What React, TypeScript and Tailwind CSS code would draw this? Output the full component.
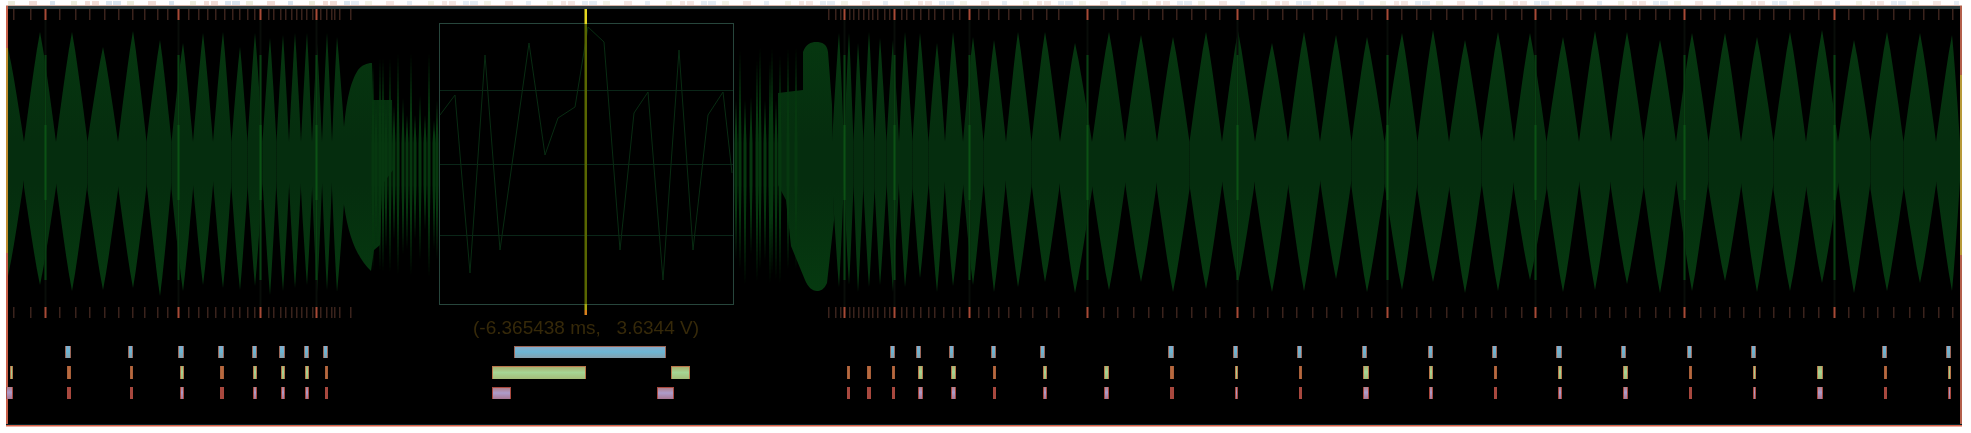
type Peak = [number, number, number];
type Mark = [number, number];

// [x, top tip y, bottom tip y]
const leftPeaks: Peak[] = [
  [8, 48, 276], [40, 32, 285], [72, 32, 291], [103, 47, 290], [133, 31, 288], [160, 40, 296],
  [183, 43, 291], [203, 33, 285], [223, 32, 288], [240, 47, 290], [255, 33, 286], [270, 38, 295],
  [283, 35, 291], [295, 33, 288], [307, 33, 285], [317, 43, 293], [327, 33, 290], [337, 37, 292],
];
const rightPeaks: Peak[] = [
  [839, 33, 287], [849, 33, 285], [858, 43, 292], [869, 32, 287], [880, 38, 285], [893, 40, 292],
  [905, 32, 287], [920, 33, 278], [937, 43, 292], [953, 32, 286], [973, 37, 285], [994, 40, 292],
  [1018, 32, 287], [1045, 32, 282], [1075, 43, 293], [1109, 32, 290], [1141, 35, 282], [1173, 37, 292],
  [1206, 32, 289], [1238, 31, 283], [1272, 43, 292], [1304, 32, 291], [1336, 35, 279], [1367, 37, 292],
  [1402, 33, 290], [1433, 30, 282], [1465, 40, 293], [1498, 32, 291], [1530, 33, 280], [1563, 37, 292],
  [1595, 31, 290], [1627, 32, 284], [1660, 40, 293], [1692, 33, 291], [1725, 33, 281], [1757, 37, 292],
  [1790, 32, 291], [1822, 30, 283], [1854, 40, 293], [1887, 32, 291], [1920, 33, 283], [1952, 35, 291],
];
const spikes: Peak[] = [
  [373, 63, 271], [376, 100, 245], [380, 58, 271], [383, 58, 272], [386, 100, 250], [390, 58, 273],
  [394, 105, 240], [398, 53, 275], [403, 98, 255], [407, 115, 250], [411, 53, 276], [415, 115, 240],
  [420, 95, 260], [425, 115, 230], [429, 53, 277], [434, 120, 250], [437, 100, 260],
  [736, 100, 260], [740, 50, 270], [745, 100, 285], [751, 97, 255], [757, 60, 282], [760, 47, 270],
  [765, 100, 262], [770, 60, 284], [772, 48, 275], [776, 100, 280], [780, 55, 284], [788, 48, 270], [796, 47, 270],
];
const majorTicks = [45, 178, 260, 316, 844, 894, 969, 1087, 1237, 1387, 1535, 1684, 1834];
const ticks = [
  13, 30, 59, 75, 89, 104, 118, 132, 144, 157, 167, 188, 198, 207, 215, 224, 232, 239, 247, 254, 268, 273,
  280, 285, 291, 296, 301, 306, 312, 320, 326, 331, 334, 339, 350,
  828, 835, 840, 849, 853, 858, 863, 868, 872, 877, 884, 889, 901, 906, 913, 920, 928, 934, 943, 952, 959,
  978, 988, 998, 1008, 1020, 1032, 1046, 1058, 1103, 1117, 1133, 1148, 1162, 1176, 1191, 1205, 1219,
  1253, 1267, 1282, 1296, 1312, 1326, 1341, 1357, 1371, 1401, 1416, 1430, 1446, 1462, 1475, 1491, 1505, 1521,
  1550, 1566, 1580, 1595, 1609, 1625, 1639, 1655, 1669, 1700, 1714, 1729, 1743, 1759, 1773, 1789, 1803, 1818,
  1848, 1863, 1877, 1893, 1909, 1923, 1938, 1952,
];

const blueMarks: Mark[] = [
  [65, 6], [128, 5], [178, 6], [218, 6], [252, 5], [279, 6], [304, 5], [323, 5], [514, 152], [890, 5], [916, 5],
  [949, 5], [991, 5], [1040, 5], [1168, 6], [1233, 5], [1297, 5], [1362, 5], [1428, 5], [1492, 5], [1556, 6],
  [1621, 5], [1687, 5], [1751, 5], [1882, 5], [1946, 5],
];
const greenMarks: Mark[] = [
  [10, 3], [180, 4], [253, 4], [281, 4], [305, 4], [492, 94], [671, 19], [918, 5], [951, 5], [1043, 4], [1104, 5],
  [1235, 3], [1363, 6], [1429, 4], [1558, 4], [1623, 5], [1753, 3], [1817, 6], [1948, 3],
];
const orangeMarks: Mark[] = [
  [67, 4], [130, 3], [220, 4], [325, 3], [847, 3], [867, 4], [892, 3], [993, 3], [1170, 4], [1299, 3], [1494, 3],
  [1689, 3], [1884, 3],
];
const purpleMarks: Mark[] = [
  [6, 7], [180, 4], [253, 4], [281, 4], [305, 4], [492, 19], [657, 17], [918, 5], [951, 5], [1043, 4], [1104, 5],
  [1235, 3], [1363, 6], [1429, 4], [1558, 4], [1623, 5], [1753, 3], [1817, 6], [1948, 3],
];

const trace =
  "440,115 455,95 470,273 485,55 500,250 514,150 529,43 545,155 558,118 575,107 588,27 604,42 620,250 634,113 648,92 663,280 679,50 693,250 708,115 723,92 732,173";

// one lobe: curved edges running from the tips to the band in the middle
function peakPath(x: number, top: number, bottom: number, l: number, r: number, valley: number) {
  const side = (edge: number, from: number, to: number) => {
    const pts: string[] = [];
    for (let s = 1; s <= 6; s++) {
      const t = s / 6;
      pts.push(`${(x + (edge - x) * Math.pow(t, 0.9)).toFixed(1)},${(from + (to - from) * t).toFixed(1)}`);
    }
    return pts;
  };
  const upR = side(r, top, 142);
  const loR = side(r, bottom, valley).reverse();
  const loL = side(l, bottom, valley);
  const upL = side(l, top, 142).reverse();
  return `M${x},${top} L${upR.join(" ")} L${loR.join(" ")} L${x},${bottom} L${loL.join(" ")} L${upL.join(" ")} Z`;
}

function Lobes({ peaks, start, end }: { peaks: Peak[]; start: number; end: number }) {
  return (
    <>
      {peaks.map(([x, top, bottom], i) => {
        const l = i === 0 ? start : (peaks[i - 1][0] + x) / 2;
        const r = i === peaks.length - 1 ? end : (peaks[i + 1][0] + x) / 2;
        return <path key={x} d={peakPath(x, top, bottom, l, r, 180 + ((i * 7) % 11))} fill="url(#wave)" />;
      })}
    </>
  );
}

function Marks({ items, y, h, fill, edge }: { items: Mark[]; y: number; h: number; fill: string; edge: string }) {
  return (
    <>
      {items.map(([x, w]) => (
        <g key={x}>
          <rect x={x} y={y} width={w} height={h} fill={edge} />
          <rect x={x + 1} y={y + (w > 10 ? 1 : 0)} width={w - 2} height={h - (w > 10 ? 1 : 0)} fill={fill} />
        </g>
      ))}
    </>
  );
}

function Noise() {
  const cells = [];
  for (let x = 8; x < 1955; x += 7) {
    const n = (x * 13) % 17;
    if (n < 8) {
      const tint = n % 3 === 0 ? "#f0dcd6" : n % 3 === 1 ? "#d8e4ee" : "#ececdc";
      cells.push(<rect key={x} x={x} y={1} width={5 + (n % 4)} height={4} fill={tint} opacity={x < 350 ? 1 : 0.7} />);
    }
  }
  return <>{cells}</>;
}

function Scope() {
  return (
    <svg width={1971} height={433} viewBox="0 0 1971 433" className="block blur-[0.35px]">
      <defs>
        <linearGradient id="wave" gradientUnits="userSpaceOnUse" x1="0" y1="30" x2="0" y2="295">
          <stop offset="0" stopColor="#063810" />
          <stop offset="0.42" stopColor="#052d0e" />
          <stop offset="0.58" stopColor="#052d0e" />
          <stop offset="1" stopColor="#063a10" />
        </linearGradient>
        <linearGradient id="blue" x1="0" y1="0" x2="0" y2="1">
          <stop offset="0" stopColor="#86accb" />
          <stop offset="0.45" stopColor="#6cb6d4" />
          <stop offset="1" stopColor="#84a0ae" />
        </linearGradient>
        <linearGradient id="green" x1="0" y1="0" x2="0" y2="1">
          <stop offset="0" stopColor="#a8b070" />
          <stop offset="0.45" stopColor="#a6d694" />
          <stop offset="1" stopColor="#a4bc78" />
        </linearGradient>
        <linearGradient id="purple" x1="0" y1="0" x2="0" y2="1">
          <stop offset="0" stopColor="#b0808c" />
          <stop offset="0.45" stopColor="#ad9ccb" />
          <stop offset="1" stopColor="#a87894" />
        </linearGradient>
      </defs>

      <rect width={1971} height={433} fill="#ffffff" />
      <Noise />
      <rect x={6} y={5} width={1956} height={1} fill="#d8b4a8" />
      <rect x={6} y={6} width={1956} height={420} fill="#000000" />
      <rect x={6} y={6} width={1956} height={3} fill="#28383a" />

      {/* edges of the plot */}
      <rect x={6} y={6} width={2} height={420} fill="#c9604a" />
      <rect x={6} y={48} width={2} height={205} fill="#c08c30" />
      <rect x={1960} y={6} width={2} height={420} fill="#b4604c" />
      <rect x={1960} y={75} width={2} height={180} fill="#b89a3a" />
      <rect x={6} y={424} width={1956} height={1} fill="#06242a" />
      <rect x={6} y={425} width={1956} height={1.5} fill="#d8634a" />

      {/* wave form */}
      <Lobes peaks={leftPeaks} start={8} end={345} />
      <Lobes peaks={rightPeaks} start={832} end={1960} />
      <path
        d="M343,143 C345,105 350,82 358,70 C362,65 367,63 372,63 L373,100 L392,100 L393,170 L382,185 L380,245 L374,250 L371,271 C358,258 349,240 344,205 Z"
        fill="url(#wave)"
      />
      <path
        d="M778,93 L803,90 L803,52 C806,44 811,42 816,42 C822,42 827,44 828,52 L832,105 L834,220 L827,283 C824,290 820,291 817,291 C812,291 808,287 805,280 L791,246 L786,200 L778,185 Z"
        fill="url(#wave)"
      />
      {spikes.map(([x, top, bottom]) => (
        <path key={x} d={`M${x},${top} L${x + 1.5},143 L${x + 1.5},185 L${x},${bottom} L${x - 1.5},185 L${x - 1.5},143 Z`} fill="#06380f" />
      ))}
      {majorTicks.map((x) => (
        <g key={x}>
          <rect x={x - 0.5} y={20} width={2} height={290} fill="#090d09" />
          <rect x={x - 0.5} y={55} width={2} height={225} fill="#084012" />
          <rect x={x - 0.5} y={125} width={2} height={75} fill="#0b5214" />
        </g>
      ))}

      {/* tick rows */}
      {ticks.map((x) => (
        <g key={x} fill="#3a231c">
          <rect x={x} y={9} width={1.5} height={11} />
          <rect x={x} y={307} width={1.5} height={11} />
        </g>
      ))}
      {majorTicks.map((x) => (
        <g key={x} fill="#a84a36">
          <rect x={x - 0.5} y={9} width={2} height={11} />
          <rect x={x - 0.5} y={307} width={2} height={11} />
        </g>
      ))}

      {/* scope inset */}
      <rect x={439.5} y={23.5} width={294} height={281} fill="#000000" stroke="#27463c" />
      <g stroke="#0a2618">
        <line x1={440} x2={733} y1={90.5} y2={90.5} />
        <line x1={440} x2={733} y1={164.5} y2={164.5} />
        <line x1={440} x2={733} y1={235.5} y2={235.5} />
      </g>
      <polyline points={trace} fill="none" stroke="#082c12" strokeWidth={1} />
      <rect x={584.5} y={24} width={2.5} height={280} fill="#586600" />
      <rect x={584.5} y={9} width={2.5} height={15} fill="#e6d820" />
      <rect x={584.5} y={304} width={2.5} height={6} fill="#a8a810" />
      <rect x={584.5} y={310} width={2.5} height={5} fill="#d8801c" />

      {/* digital rows */}
      <Marks items={blueMarks} y={346} h={12} fill="url(#blue)" edge="#9a6658" />
      <Marks items={greenMarks} y={366} h={13} fill="url(#green)" edge="#b8764a" />
      <Marks items={orangeMarks} y={366} h={13} fill="#b8683e" edge="#a8603a" />
      <Marks items={purpleMarks} y={387} h={12} fill="url(#purple)" edge="#a8483e" />
      <Marks items={orangeMarks} y={387} h={12} fill="#a8483e" edge="#a8483e" />
    </svg>
  );
}

export default function App() {
  return (
    <div className="relative h-[433px] w-[1971px] overflow-hidden bg-white">
      <Scope />
      <div className="absolute left-[473px] top-[316px] whitespace-pre text-[19px] leading-6 text-[#362909] blur-[0.4px] [font-family:'Liberation_Sans',Arial,sans-serif]">
        (-6.365438 ms,   3.6344 V)
      </div>
    </div>
  );
}
